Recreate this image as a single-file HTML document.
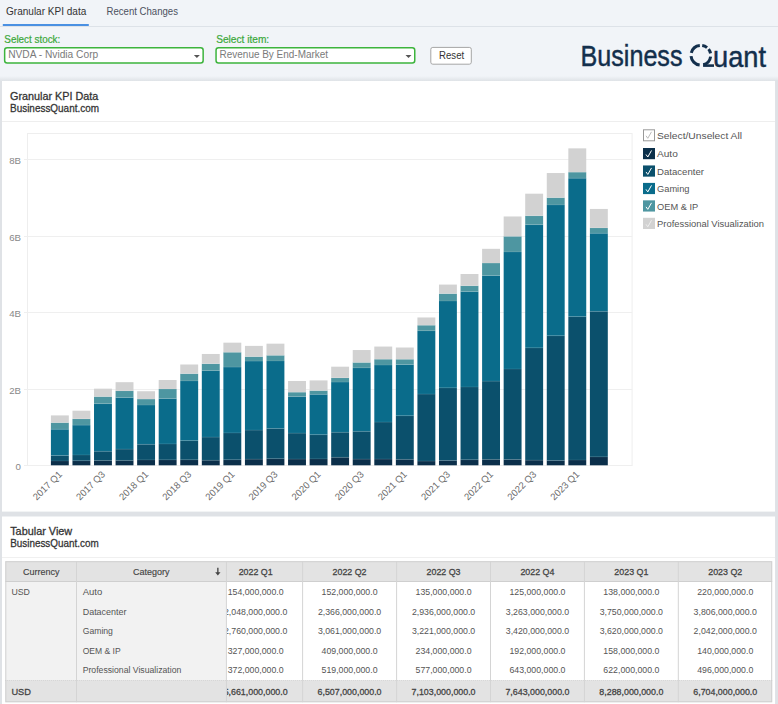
<!DOCTYPE html>
<html><head><meta charset="utf-8"><style>
html,body{margin:0;padding:0;background:#f1f4f8;width:778px;height:704px;overflow:hidden}
svg{display:block;font-family:"Liberation Sans", sans-serif}
</style></head><body>
<svg width="778" height="704" viewBox="0 0 778 704">
<rect x="0" y="0" width="778" height="78" fill="#f1f4f8"/>
<rect x="0" y="76" width="778" height="628" fill="#dfe2e6"/>
<defs><linearGradient id="sh" x1="0" y1="0" x2="0" y2="1"><stop offset="0" stop-color="#f1f4f8"/><stop offset="1" stop-color="#dfe3e7"/></linearGradient></defs>
<rect x="0" y="76" width="778" height="5" fill="url(#sh)"/>
<text x="6" y="15.2" font-size="11.5" fill="#333" font-weight="normal" text-anchor="start" textLength="80.3" lengthAdjust="spacingAndGlyphs">Granular KPI data</text>
<text x="106.5" y="15.2" font-size="11.5" fill="#4c5260" font-weight="normal" text-anchor="start" textLength="71.5" lengthAdjust="spacingAndGlyphs">Recent Changes</text>
<line x1="0" y1="26.5" x2="778" y2="26.5" stroke="#dde2e8" stroke-width="1"/>
<rect x="2.8" y="24" width="86" height="2" fill="#4a90e2"/>
<text x="4.3" y="43.1" font-size="10.3" fill="#3aa83a" font-weight="normal" text-anchor="start" textLength="56" lengthAdjust="spacingAndGlyphs" stroke="#3aa83a" stroke-width="0.2">Select stock:</text>
<text x="216.2" y="43.1" font-size="10.3" fill="#3aa83a" font-weight="normal" text-anchor="start" textLength="53" lengthAdjust="spacingAndGlyphs" stroke="#3aa83a" stroke-width="0.2">Select item:</text>
<rect x="4.65" y="47.75" width="198.5" height="15.25" rx="2.5" fill="#fff" stroke="#3db43d" stroke-width="1.5"/>
<text x="8.2" y="57.8" font-size="10" fill="#7a7a7a" font-weight="normal" text-anchor="start" textLength="90" lengthAdjust="spacingAndGlyphs">NVDA - Nvidia Corp</text>
<path d="M193.9,55 L199.9,55 L196.9,58 Z" fill="#555"/>
<rect x="216.05" y="47.75" width="198.7" height="15.25" rx="2.5" fill="#fff" stroke="#3db43d" stroke-width="1.5"/>
<text x="219.60000000000002" y="57.8" font-size="10" fill="#7a7a7a" font-weight="normal" text-anchor="start" textLength="108.5" lengthAdjust="spacingAndGlyphs">Revenue By End-Market</text>
<path d="M405.5,55 L411.5,55 L408.5,58 Z" fill="#555"/>
<rect x="430.8" y="47.4" width="40.5" height="16.8" rx="2" fill="#fff" stroke="#a5a5a5" stroke-width="1"/>
<text x="439" y="58.7" font-size="10.5" fill="#333" font-weight="normal" text-anchor="start" textLength="25.2" lengthAdjust="spacingAndGlyphs">Reset</text>
<text x="580.5" y="66.4" font-size="29" fill="#132f4c" font-weight="normal" text-anchor="start" textLength="102" lengthAdjust="spacingAndGlyphs" stroke="#132f4c" stroke-width="0.45">Business</text>
<text x="713" y="66.5" font-size="29" fill="#132f4c" font-weight="normal" text-anchor="start" textLength="53" lengthAdjust="spacingAndGlyphs" stroke="#132f4c" stroke-width="0.45">uant</text>
<path d="M699.65,65.03 A9.85,9.85 0 0 1 691.04,56.11" fill="none" stroke="#132f4c" stroke-width="3.0"/>
<path d="M691.29,52.87 A9.85,9.85 0 0 1 699.82,45.45" fill="none" stroke="#132f4c" stroke-width="3.0"/>
<path d="M702.22,45.50 A9.85,9.85 0 0 1 707.05,47.60" fill="none" stroke="#132f4c" stroke-width="3.0"/>
<path d="M708.61,49.19 A9.85,9.85 0 0 1 710.52,53.37" fill="none" stroke="#132f4c" stroke-width="3.0"/>
<path d="M710.60,56.62 A9.85,9.85 0 0 1 703.23,64.81" fill="none" stroke="#132f4c" stroke-width="3.0"/>
<path d="M703.1,65.6 L714,65.6" stroke="#132f4c" stroke-width="2.6"/>
<rect x="2" y="81" width="773.2" height="430.6" fill="#fff"/>
<text x="10" y="99.6" font-size="10.8" fill="#333" font-weight="normal" text-anchor="start" textLength="88.3" lengthAdjust="spacingAndGlyphs" stroke="#333" stroke-width="0.28">Granular KPI Data</text>
<text x="10" y="111.6" font-size="10.8" fill="#333" font-weight="normal" text-anchor="start" textLength="89" lengthAdjust="spacingAndGlyphs" stroke="#333" stroke-width="0.28">BusinessQuant.com</text>
<line x1="2" y1="121.5" x2="775.2" y2="121.5" stroke="#eeeeee" stroke-width="1"/>
<rect x="27.5" y="133.5" width="604.6" height="332" fill="none" stroke="#eeeeee" stroke-width="1"/>
<line x1="24" y1="159.5" x2="632.1" y2="159.5" stroke="#efefef" stroke-width="1"/>
<text x="21.0" y="163.6" font-size="9.7" fill="#888" font-weight="normal" text-anchor="end">8B</text>
<line x1="24" y1="236.5" x2="632.1" y2="236.5" stroke="#efefef" stroke-width="1"/>
<text x="21.0" y="240.6" font-size="9.7" fill="#888" font-weight="normal" text-anchor="end">6B</text>
<line x1="24" y1="312.5" x2="632.1" y2="312.5" stroke="#efefef" stroke-width="1"/>
<text x="21.0" y="316.6" font-size="9.7" fill="#888" font-weight="normal" text-anchor="end">4B</text>
<line x1="24" y1="389.5" x2="632.1" y2="389.5" stroke="#efefef" stroke-width="1"/>
<text x="21.0" y="393.6" font-size="9.7" fill="#888" font-weight="normal" text-anchor="end">2B</text>
<line x1="24" y1="465.5" x2="632.1" y2="465.5" stroke="#efefef" stroke-width="1"/>
<text x="21.0" y="469.6" font-size="9.7" fill="#888" font-weight="normal" text-anchor="end">0</text>
<rect x="50.90" y="460.98" width="17.9" height="4.32" fill="#0b2f4a"/>
<rect x="50.90" y="455.51" width="17.9" height="5.47" fill="#0b506c"/>
<rect x="50.90" y="429.24" width="17.9" height="26.27" fill="#0a6c8b"/>
<rect x="50.90" y="422.62" width="17.9" height="6.62" fill="#4e96a1"/>
<rect x="50.90" y="415.40" width="17.9" height="7.23" fill="#d2d2d2"/>
<line x1="50.90" y1="460.98" x2="68.80" y2="460.98" stroke="rgba(255,255,255,0.13)" stroke-width="0.8"/>
<line x1="50.90" y1="455.51" x2="68.80" y2="455.51" stroke="rgba(255,255,255,0.13)" stroke-width="0.8"/>
<line x1="50.90" y1="429.24" x2="68.80" y2="429.24" stroke="rgba(255,255,255,0.13)" stroke-width="0.8"/>
<line x1="50.90" y1="422.62" x2="68.80" y2="422.62" stroke="rgba(255,255,255,0.13)" stroke-width="0.8"/>
<rect x="72.46" y="460.75" width="17.9" height="4.55" fill="#0b2f4a"/>
<rect x="72.46" y="454.98" width="17.9" height="5.77" fill="#0b506c"/>
<rect x="72.46" y="425.11" width="17.9" height="29.87" fill="#0a6c8b"/>
<rect x="72.46" y="418.88" width="17.9" height="6.23" fill="#4e96a1"/>
<rect x="72.46" y="410.69" width="17.9" height="8.18" fill="#d2d2d2"/>
<line x1="72.46" y1="460.75" x2="90.36" y2="460.75" stroke="rgba(255,255,255,0.13)" stroke-width="0.8"/>
<line x1="72.46" y1="454.98" x2="90.36" y2="454.98" stroke="rgba(255,255,255,0.13)" stroke-width="0.8"/>
<line x1="72.46" y1="425.11" x2="90.36" y2="425.11" stroke="rgba(255,255,255,0.13)" stroke-width="0.8"/>
<line x1="72.46" y1="418.88" x2="90.36" y2="418.88" stroke="rgba(255,255,255,0.13)" stroke-width="0.8"/>
<rect x="94.02" y="460.44" width="17.9" height="4.86" fill="#0b2f4a"/>
<rect x="94.02" y="451.27" width="17.9" height="9.18" fill="#0b506c"/>
<rect x="94.02" y="403.70" width="17.9" height="47.57" fill="#0a6c8b"/>
<rect x="94.02" y="396.58" width="17.9" height="7.11" fill="#4e96a1"/>
<rect x="94.02" y="388.67" width="17.9" height="7.92" fill="#d2d2d2"/>
<line x1="94.02" y1="460.44" x2="111.92" y2="460.44" stroke="rgba(255,255,255,0.13)" stroke-width="0.8"/>
<line x1="94.02" y1="451.27" x2="111.92" y2="451.27" stroke="rgba(255,255,255,0.13)" stroke-width="0.8"/>
<line x1="94.02" y1="403.70" x2="111.92" y2="403.70" stroke="rgba(255,255,255,0.13)" stroke-width="0.8"/>
<line x1="94.02" y1="396.58" x2="111.92" y2="396.58" stroke="rgba(255,255,255,0.13)" stroke-width="0.8"/>
<rect x="115.58" y="460.41" width="17.9" height="4.89" fill="#0b2f4a"/>
<rect x="115.58" y="449.09" width="17.9" height="11.32" fill="#0b506c"/>
<rect x="115.58" y="397.54" width="17.9" height="51.55" fill="#0a6c8b"/>
<rect x="115.58" y="390.81" width="17.9" height="6.73" fill="#4e96a1"/>
<rect x="115.58" y="382.20" width="17.9" height="8.60" fill="#d2d2d2"/>
<line x1="115.58" y1="460.41" x2="133.48" y2="460.41" stroke="rgba(255,255,255,0.13)" stroke-width="0.8"/>
<line x1="115.58" y1="449.09" x2="133.48" y2="449.09" stroke="rgba(255,255,255,0.13)" stroke-width="0.8"/>
<line x1="115.58" y1="397.54" x2="133.48" y2="397.54" stroke="rgba(255,255,255,0.13)" stroke-width="0.8"/>
<line x1="115.58" y1="390.81" x2="133.48" y2="390.81" stroke="rgba(255,255,255,0.13)" stroke-width="0.8"/>
<rect x="137.14" y="459.95" width="17.9" height="5.35" fill="#0b2f4a"/>
<rect x="137.14" y="444.31" width="17.9" height="15.64" fill="#0b506c"/>
<rect x="137.14" y="405.03" width="17.9" height="39.27" fill="#0a6c8b"/>
<rect x="137.14" y="399.07" width="17.9" height="5.97" fill="#4e96a1"/>
<rect x="137.14" y="391.23" width="17.9" height="7.84" fill="#d2d2d2"/>
<line x1="137.14" y1="459.95" x2="155.04" y2="459.95" stroke="rgba(255,255,255,0.13)" stroke-width="0.8"/>
<line x1="137.14" y1="444.31" x2="155.04" y2="444.31" stroke="rgba(255,255,255,0.13)" stroke-width="0.8"/>
<line x1="137.14" y1="405.03" x2="155.04" y2="405.03" stroke="rgba(255,255,255,0.13)" stroke-width="0.8"/>
<line x1="137.14" y1="399.07" x2="155.04" y2="399.07" stroke="rgba(255,255,255,0.13)" stroke-width="0.8"/>
<rect x="158.70" y="459.87" width="17.9" height="5.43" fill="#0b2f4a"/>
<rect x="158.70" y="443.96" width="17.9" height="15.91" fill="#0b506c"/>
<rect x="158.70" y="398.61" width="17.9" height="45.35" fill="#0a6c8b"/>
<rect x="158.70" y="389.01" width="17.9" height="9.60" fill="#4e96a1"/>
<rect x="158.70" y="380.02" width="17.9" height="8.99" fill="#d2d2d2"/>
<line x1="158.70" y1="459.87" x2="176.60" y2="459.87" stroke="rgba(255,255,255,0.13)" stroke-width="0.8"/>
<line x1="158.70" y1="443.96" x2="176.60" y2="443.96" stroke="rgba(255,255,255,0.13)" stroke-width="0.8"/>
<line x1="158.70" y1="398.61" x2="176.60" y2="398.61" stroke="rgba(255,255,255,0.13)" stroke-width="0.8"/>
<line x1="158.70" y1="389.01" x2="176.60" y2="389.01" stroke="rgba(255,255,255,0.13)" stroke-width="0.8"/>
<rect x="180.26" y="459.79" width="17.9" height="5.51" fill="#0b2f4a"/>
<rect x="180.26" y="440.64" width="17.9" height="19.16" fill="#0b506c"/>
<rect x="180.26" y="380.94" width="17.9" height="59.69" fill="#0a6c8b"/>
<rect x="180.26" y="373.64" width="17.9" height="7.30" fill="#4e96a1"/>
<rect x="180.26" y="364.50" width="17.9" height="9.14" fill="#d2d2d2"/>
<line x1="180.26" y1="459.79" x2="198.16" y2="459.79" stroke="rgba(255,255,255,0.13)" stroke-width="0.8"/>
<line x1="180.26" y1="440.64" x2="198.16" y2="440.64" stroke="rgba(255,255,255,0.13)" stroke-width="0.8"/>
<line x1="180.26" y1="380.94" x2="198.16" y2="380.94" stroke="rgba(255,255,255,0.13)" stroke-width="0.8"/>
<line x1="180.26" y1="373.64" x2="198.16" y2="373.64" stroke="rgba(255,255,255,0.13)" stroke-width="0.8"/>
<rect x="201.82" y="460.25" width="17.9" height="5.05" fill="#0b2f4a"/>
<rect x="201.82" y="437.08" width="17.9" height="23.17" fill="#0b506c"/>
<rect x="201.82" y="370.58" width="17.9" height="66.50" fill="#0a6c8b"/>
<rect x="201.82" y="363.70" width="17.9" height="6.88" fill="#4e96a1"/>
<rect x="201.82" y="353.98" width="17.9" height="9.71" fill="#d2d2d2"/>
<line x1="201.82" y1="460.25" x2="219.72" y2="460.25" stroke="rgba(255,255,255,0.13)" stroke-width="0.8"/>
<line x1="201.82" y1="437.08" x2="219.72" y2="437.08" stroke="rgba(255,255,255,0.13)" stroke-width="0.8"/>
<line x1="201.82" y1="370.58" x2="219.72" y2="370.58" stroke="rgba(255,255,255,0.13)" stroke-width="0.8"/>
<line x1="201.82" y1="363.70" x2="219.72" y2="363.70" stroke="rgba(255,255,255,0.13)" stroke-width="0.8"/>
<rect x="223.38" y="459.76" width="17.9" height="5.54" fill="#0b2f4a"/>
<rect x="223.38" y="432.95" width="17.9" height="26.81" fill="#0b506c"/>
<rect x="223.38" y="367.06" width="17.9" height="65.89" fill="#0a6c8b"/>
<rect x="223.38" y="352.26" width="17.9" height="14.80" fill="#4e96a1"/>
<rect x="223.38" y="342.66" width="17.9" height="9.60" fill="#d2d2d2"/>
<line x1="223.38" y1="459.76" x2="241.28" y2="459.76" stroke="rgba(255,255,255,0.13)" stroke-width="0.8"/>
<line x1="223.38" y1="432.95" x2="241.28" y2="432.95" stroke="rgba(255,255,255,0.13)" stroke-width="0.8"/>
<line x1="223.38" y1="367.06" x2="241.28" y2="367.06" stroke="rgba(255,255,255,0.13)" stroke-width="0.8"/>
<line x1="223.38" y1="352.26" x2="241.28" y2="352.26" stroke="rgba(255,255,255,0.13)" stroke-width="0.8"/>
<rect x="244.94" y="459.14" width="17.9" height="6.16" fill="#0b2f4a"/>
<rect x="244.94" y="430.08" width="17.9" height="29.06" fill="#0b506c"/>
<rect x="244.94" y="361.06" width="17.9" height="69.02" fill="#0a6c8b"/>
<rect x="244.94" y="356.62" width="17.9" height="4.44" fill="#4e96a1"/>
<rect x="244.94" y="345.88" width="17.9" height="10.75" fill="#d2d2d2"/>
<line x1="244.94" y1="459.14" x2="262.84" y2="459.14" stroke="rgba(255,255,255,0.13)" stroke-width="0.8"/>
<line x1="244.94" y1="430.08" x2="262.84" y2="430.08" stroke="rgba(255,255,255,0.13)" stroke-width="0.8"/>
<line x1="244.94" y1="361.06" x2="262.84" y2="361.06" stroke="rgba(255,255,255,0.13)" stroke-width="0.8"/>
<line x1="244.94" y1="356.62" x2="262.84" y2="356.62" stroke="rgba(255,255,255,0.13)" stroke-width="0.8"/>
<rect x="266.50" y="458.72" width="17.9" height="6.58" fill="#0b2f4a"/>
<rect x="266.50" y="428.44" width="17.9" height="30.29" fill="#0b506c"/>
<rect x="266.50" y="360.98" width="17.9" height="67.46" fill="#0a6c8b"/>
<rect x="266.50" y="355.32" width="17.9" height="5.66" fill="#4e96a1"/>
<rect x="266.50" y="343.66" width="17.9" height="11.66" fill="#d2d2d2"/>
<line x1="266.50" y1="458.72" x2="284.40" y2="458.72" stroke="rgba(255,255,255,0.13)" stroke-width="0.8"/>
<line x1="266.50" y1="428.44" x2="284.40" y2="428.44" stroke="rgba(255,255,255,0.13)" stroke-width="0.8"/>
<line x1="266.50" y1="360.98" x2="284.40" y2="360.98" stroke="rgba(255,255,255,0.13)" stroke-width="0.8"/>
<line x1="266.50" y1="355.32" x2="284.40" y2="355.32" stroke="rgba(255,255,255,0.13)" stroke-width="0.8"/>
<rect x="288.06" y="459.07" width="17.9" height="6.23" fill="#0b2f4a"/>
<rect x="288.06" y="433.10" width="17.9" height="25.96" fill="#0b506c"/>
<rect x="288.06" y="396.62" width="17.9" height="36.48" fill="#0a6c8b"/>
<rect x="288.06" y="392.19" width="17.9" height="4.44" fill="#4e96a1"/>
<rect x="288.06" y="380.98" width="17.9" height="11.20" fill="#d2d2d2"/>
<line x1="288.06" y1="459.07" x2="305.96" y2="459.07" stroke="rgba(255,255,255,0.13)" stroke-width="0.8"/>
<line x1="288.06" y1="433.10" x2="305.96" y2="433.10" stroke="rgba(255,255,255,0.13)" stroke-width="0.8"/>
<line x1="288.06" y1="396.62" x2="305.96" y2="396.62" stroke="rgba(255,255,255,0.13)" stroke-width="0.8"/>
<line x1="288.06" y1="392.19" x2="305.96" y2="392.19" stroke="rgba(255,255,255,0.13)" stroke-width="0.8"/>
<rect x="309.62" y="458.95" width="17.9" height="6.35" fill="#0b2f4a"/>
<rect x="309.62" y="434.71" width="17.9" height="24.24" fill="#0b506c"/>
<rect x="309.62" y="394.36" width="17.9" height="40.34" fill="#0a6c8b"/>
<rect x="309.62" y="390.58" width="17.9" height="3.79" fill="#4e96a1"/>
<rect x="309.62" y="380.41" width="17.9" height="10.17" fill="#d2d2d2"/>
<line x1="309.62" y1="458.95" x2="327.52" y2="458.95" stroke="rgba(255,255,255,0.13)" stroke-width="0.8"/>
<line x1="309.62" y1="434.71" x2="327.52" y2="434.71" stroke="rgba(255,255,255,0.13)" stroke-width="0.8"/>
<line x1="309.62" y1="394.36" x2="327.52" y2="394.36" stroke="rgba(255,255,255,0.13)" stroke-width="0.8"/>
<line x1="309.62" y1="390.58" x2="327.52" y2="390.58" stroke="rgba(255,255,255,0.13)" stroke-width="0.8"/>
<rect x="331.18" y="457.31" width="17.9" height="7.99" fill="#0b2f4a"/>
<rect x="331.18" y="432.26" width="17.9" height="25.05" fill="#0b506c"/>
<rect x="331.18" y="382.05" width="17.9" height="50.21" fill="#0a6c8b"/>
<rect x="331.18" y="377.81" width="17.9" height="4.24" fill="#4e96a1"/>
<rect x="331.18" y="366.68" width="17.9" height="11.13" fill="#d2d2d2"/>
<line x1="331.18" y1="457.31" x2="349.08" y2="457.31" stroke="rgba(255,255,255,0.13)" stroke-width="0.8"/>
<line x1="331.18" y1="432.26" x2="349.08" y2="432.26" stroke="rgba(255,255,255,0.13)" stroke-width="0.8"/>
<line x1="331.18" y1="382.05" x2="349.08" y2="382.05" stroke="rgba(255,255,255,0.13)" stroke-width="0.8"/>
<line x1="331.18" y1="377.81" x2="349.08" y2="377.81" stroke="rgba(255,255,255,0.13)" stroke-width="0.8"/>
<rect x="352.74" y="459.11" width="17.9" height="6.19" fill="#0b2f4a"/>
<rect x="352.74" y="431.34" width="17.9" height="27.76" fill="#0b506c"/>
<rect x="352.74" y="367.90" width="17.9" height="63.44" fill="#0a6c8b"/>
<rect x="352.74" y="362.43" width="17.9" height="5.47" fill="#4e96a1"/>
<rect x="352.74" y="350.04" width="17.9" height="12.39" fill="#d2d2d2"/>
<line x1="352.74" y1="459.11" x2="370.64" y2="459.11" stroke="rgba(255,255,255,0.13)" stroke-width="0.8"/>
<line x1="352.74" y1="431.34" x2="370.64" y2="431.34" stroke="rgba(255,255,255,0.13)" stroke-width="0.8"/>
<line x1="352.74" y1="367.90" x2="370.64" y2="367.90" stroke="rgba(255,255,255,0.13)" stroke-width="0.8"/>
<line x1="352.74" y1="362.43" x2="370.64" y2="362.43" stroke="rgba(255,255,255,0.13)" stroke-width="0.8"/>
<rect x="374.30" y="459.07" width="17.9" height="6.23" fill="#0b2f4a"/>
<rect x="374.30" y="422.05" width="17.9" height="37.02" fill="#0b506c"/>
<rect x="374.30" y="365.03" width="17.9" height="57.02" fill="#0a6c8b"/>
<rect x="374.30" y="359.22" width="17.9" height="5.81" fill="#4e96a1"/>
<rect x="374.30" y="346.56" width="17.9" height="12.66" fill="#d2d2d2"/>
<line x1="374.30" y1="459.07" x2="392.20" y2="459.07" stroke="rgba(255,255,255,0.13)" stroke-width="0.8"/>
<line x1="374.30" y1="422.05" x2="392.20" y2="422.05" stroke="rgba(255,255,255,0.13)" stroke-width="0.8"/>
<line x1="374.30" y1="365.03" x2="392.20" y2="365.03" stroke="rgba(255,255,255,0.13)" stroke-width="0.8"/>
<line x1="374.30" y1="359.22" x2="392.20" y2="359.22" stroke="rgba(255,255,255,0.13)" stroke-width="0.8"/>
<rect x="395.86" y="459.37" width="17.9" height="5.93" fill="#0b2f4a"/>
<rect x="395.86" y="415.74" width="17.9" height="43.63" fill="#0b506c"/>
<rect x="395.86" y="364.54" width="17.9" height="51.20" fill="#0a6c8b"/>
<rect x="395.86" y="359.26" width="17.9" height="5.28" fill="#4e96a1"/>
<rect x="395.86" y="347.52" width="17.9" height="11.74" fill="#d2d2d2"/>
<line x1="395.86" y1="459.37" x2="413.76" y2="459.37" stroke="rgba(255,255,255,0.13)" stroke-width="0.8"/>
<line x1="395.86" y1="415.74" x2="413.76" y2="415.74" stroke="rgba(255,255,255,0.13)" stroke-width="0.8"/>
<line x1="395.86" y1="364.54" x2="413.76" y2="364.54" stroke="rgba(255,255,255,0.13)" stroke-width="0.8"/>
<line x1="395.86" y1="359.26" x2="413.76" y2="359.26" stroke="rgba(255,255,255,0.13)" stroke-width="0.8"/>
<rect x="417.42" y="461.06" width="17.9" height="4.24" fill="#0b2f4a"/>
<rect x="417.42" y="394.06" width="17.9" height="67.00" fill="#0b506c"/>
<rect x="417.42" y="330.81" width="17.9" height="63.25" fill="#0a6c8b"/>
<rect x="417.42" y="325.23" width="17.9" height="5.58" fill="#4e96a1"/>
<rect x="417.42" y="317.46" width="17.9" height="7.76" fill="#d2d2d2"/>
<line x1="417.42" y1="461.06" x2="435.32" y2="461.06" stroke="rgba(255,255,255,0.13)" stroke-width="0.8"/>
<line x1="417.42" y1="394.06" x2="435.32" y2="394.06" stroke="rgba(255,255,255,0.13)" stroke-width="0.8"/>
<line x1="417.42" y1="330.81" x2="435.32" y2="330.81" stroke="rgba(255,255,255,0.13)" stroke-width="0.8"/>
<line x1="417.42" y1="325.23" x2="435.32" y2="325.23" stroke="rgba(255,255,255,0.13)" stroke-width="0.8"/>
<rect x="438.98" y="460.52" width="17.9" height="4.78" fill="#0b2f4a"/>
<rect x="438.98" y="387.86" width="17.9" height="72.66" fill="#0b506c"/>
<rect x="438.98" y="301.02" width="17.9" height="86.84" fill="#0a6c8b"/>
<rect x="438.98" y="293.60" width="17.9" height="7.42" fill="#4e96a1"/>
<rect x="438.98" y="284.58" width="17.9" height="9.02" fill="#d2d2d2"/>
<line x1="438.98" y1="460.52" x2="456.88" y2="460.52" stroke="rgba(255,255,255,0.13)" stroke-width="0.8"/>
<line x1="438.98" y1="387.86" x2="456.88" y2="387.86" stroke="rgba(255,255,255,0.13)" stroke-width="0.8"/>
<line x1="438.98" y1="301.02" x2="456.88" y2="301.02" stroke="rgba(255,255,255,0.13)" stroke-width="0.8"/>
<line x1="438.98" y1="293.60" x2="456.88" y2="293.60" stroke="rgba(255,255,255,0.13)" stroke-width="0.8"/>
<rect x="460.54" y="459.76" width="17.9" height="5.54" fill="#0b2f4a"/>
<rect x="460.54" y="386.98" width="17.9" height="72.77" fill="#0b506c"/>
<rect x="460.54" y="291.58" width="17.9" height="95.41" fill="#0a6c8b"/>
<rect x="460.54" y="285.72" width="17.9" height="5.85" fill="#4e96a1"/>
<rect x="460.54" y="273.99" width="17.9" height="11.74" fill="#d2d2d2"/>
<line x1="460.54" y1="459.76" x2="478.44" y2="459.76" stroke="rgba(255,255,255,0.13)" stroke-width="0.8"/>
<line x1="460.54" y1="386.98" x2="478.44" y2="386.98" stroke="rgba(255,255,255,0.13)" stroke-width="0.8"/>
<line x1="460.54" y1="291.58" x2="478.44" y2="291.58" stroke="rgba(255,255,255,0.13)" stroke-width="0.8"/>
<line x1="460.54" y1="285.72" x2="478.44" y2="285.72" stroke="rgba(255,255,255,0.13)" stroke-width="0.8"/>
<rect x="482.10" y="459.41" width="17.9" height="5.89" fill="#0b2f4a"/>
<rect x="482.10" y="381.10" width="17.9" height="78.32" fill="#0b506c"/>
<rect x="482.10" y="275.55" width="17.9" height="105.54" fill="#0a6c8b"/>
<rect x="482.10" y="263.05" width="17.9" height="12.50" fill="#4e96a1"/>
<rect x="482.10" y="248.82" width="17.9" height="14.23" fill="#d2d2d2"/>
<line x1="482.10" y1="459.41" x2="500.00" y2="459.41" stroke="rgba(255,255,255,0.13)" stroke-width="0.8"/>
<line x1="482.10" y1="381.10" x2="500.00" y2="381.10" stroke="rgba(255,255,255,0.13)" stroke-width="0.8"/>
<line x1="482.10" y1="275.55" x2="500.00" y2="275.55" stroke="rgba(255,255,255,0.13)" stroke-width="0.8"/>
<line x1="482.10" y1="263.05" x2="500.00" y2="263.05" stroke="rgba(255,255,255,0.13)" stroke-width="0.8"/>
<rect x="503.66" y="459.49" width="17.9" height="5.81" fill="#0b2f4a"/>
<rect x="503.66" y="369.01" width="17.9" height="90.48" fill="#0b506c"/>
<rect x="503.66" y="251.96" width="17.9" height="117.05" fill="#0a6c8b"/>
<rect x="503.66" y="236.32" width="17.9" height="15.64" fill="#4e96a1"/>
<rect x="503.66" y="216.47" width="17.9" height="19.85" fill="#d2d2d2"/>
<line x1="503.66" y1="459.49" x2="521.56" y2="459.49" stroke="rgba(255,255,255,0.13)" stroke-width="0.8"/>
<line x1="503.66" y1="369.01" x2="521.56" y2="369.01" stroke="rgba(255,255,255,0.13)" stroke-width="0.8"/>
<line x1="503.66" y1="251.96" x2="521.56" y2="251.96" stroke="rgba(255,255,255,0.13)" stroke-width="0.8"/>
<line x1="503.66" y1="236.32" x2="521.56" y2="236.32" stroke="rgba(255,255,255,0.13)" stroke-width="0.8"/>
<rect x="525.22" y="460.14" width="17.9" height="5.16" fill="#0b2f4a"/>
<rect x="525.22" y="347.86" width="17.9" height="112.27" fill="#0b506c"/>
<rect x="525.22" y="224.69" width="17.9" height="123.17" fill="#0a6c8b"/>
<rect x="525.22" y="215.75" width="17.9" height="8.95" fill="#4e96a1"/>
<rect x="525.22" y="193.68" width="17.9" height="22.06" fill="#d2d2d2"/>
<line x1="525.22" y1="460.14" x2="543.12" y2="460.14" stroke="rgba(255,255,255,0.13)" stroke-width="0.8"/>
<line x1="525.22" y1="347.86" x2="543.12" y2="347.86" stroke="rgba(255,255,255,0.13)" stroke-width="0.8"/>
<line x1="525.22" y1="224.69" x2="543.12" y2="224.69" stroke="rgba(255,255,255,0.13)" stroke-width="0.8"/>
<line x1="525.22" y1="215.75" x2="543.12" y2="215.75" stroke="rgba(255,255,255,0.13)" stroke-width="0.8"/>
<rect x="546.78" y="460.52" width="17.9" height="4.78" fill="#0b2f4a"/>
<rect x="546.78" y="335.74" width="17.9" height="124.78" fill="#0b506c"/>
<rect x="546.78" y="204.96" width="17.9" height="130.78" fill="#0a6c8b"/>
<rect x="546.78" y="197.62" width="17.9" height="7.34" fill="#4e96a1"/>
<rect x="546.78" y="173.03" width="17.9" height="24.59" fill="#d2d2d2"/>
<line x1="546.78" y1="460.52" x2="564.68" y2="460.52" stroke="rgba(255,255,255,0.13)" stroke-width="0.8"/>
<line x1="546.78" y1="335.74" x2="564.68" y2="335.74" stroke="rgba(255,255,255,0.13)" stroke-width="0.8"/>
<line x1="546.78" y1="204.96" x2="564.68" y2="204.96" stroke="rgba(255,255,255,0.13)" stroke-width="0.8"/>
<line x1="546.78" y1="197.62" x2="564.68" y2="197.62" stroke="rgba(255,255,255,0.13)" stroke-width="0.8"/>
<rect x="568.34" y="460.02" width="17.9" height="5.28" fill="#0b2f4a"/>
<rect x="568.34" y="316.62" width="17.9" height="143.40" fill="#0b506c"/>
<rect x="568.34" y="178.19" width="17.9" height="138.43" fill="#0a6c8b"/>
<rect x="568.34" y="172.15" width="17.9" height="6.04" fill="#4e96a1"/>
<rect x="568.34" y="148.37" width="17.9" height="23.79" fill="#d2d2d2"/>
<line x1="568.34" y1="460.02" x2="586.24" y2="460.02" stroke="rgba(255,255,255,0.13)" stroke-width="0.8"/>
<line x1="568.34" y1="316.62" x2="586.24" y2="316.62" stroke="rgba(255,255,255,0.13)" stroke-width="0.8"/>
<line x1="568.34" y1="178.19" x2="586.24" y2="178.19" stroke="rgba(255,255,255,0.13)" stroke-width="0.8"/>
<line x1="568.34" y1="172.15" x2="586.24" y2="172.15" stroke="rgba(255,255,255,0.13)" stroke-width="0.8"/>
<rect x="589.90" y="456.89" width="17.9" height="8.41" fill="#0b2f4a"/>
<rect x="589.90" y="311.35" width="17.9" height="145.54" fill="#0b506c"/>
<rect x="589.90" y="233.26" width="17.9" height="78.09" fill="#0a6c8b"/>
<rect x="589.90" y="227.91" width="17.9" height="5.35" fill="#4e96a1"/>
<rect x="589.90" y="208.94" width="17.9" height="18.97" fill="#d2d2d2"/>
<line x1="589.90" y1="456.89" x2="607.80" y2="456.89" stroke="rgba(255,255,255,0.13)" stroke-width="0.8"/>
<line x1="589.90" y1="311.35" x2="607.80" y2="311.35" stroke="rgba(255,255,255,0.13)" stroke-width="0.8"/>
<line x1="589.90" y1="233.26" x2="607.80" y2="233.26" stroke="rgba(255,255,255,0.13)" stroke-width="0.8"/>
<line x1="589.90" y1="227.91" x2="607.80" y2="227.91" stroke="rgba(255,255,255,0.13)" stroke-width="0.8"/>
<text x="62.65" y="475" font-size="9.6" fill="#6a6a6a" text-anchor="end" textLength="36.5" lengthAdjust="spacingAndGlyphs" transform="rotate(-45 62.65 475)">2017 Q1</text>
<text x="105.77" y="475" font-size="9.6" fill="#6a6a6a" text-anchor="end" textLength="36.5" lengthAdjust="spacingAndGlyphs" transform="rotate(-45 105.77 475)">2017 Q3</text>
<text x="148.89" y="475" font-size="9.6" fill="#6a6a6a" text-anchor="end" textLength="36.5" lengthAdjust="spacingAndGlyphs" transform="rotate(-45 148.89 475)">2018 Q1</text>
<text x="192.01" y="475" font-size="9.6" fill="#6a6a6a" text-anchor="end" textLength="36.5" lengthAdjust="spacingAndGlyphs" transform="rotate(-45 192.01 475)">2018 Q3</text>
<text x="235.13" y="475" font-size="9.6" fill="#6a6a6a" text-anchor="end" textLength="36.5" lengthAdjust="spacingAndGlyphs" transform="rotate(-45 235.13 475)">2019 Q1</text>
<text x="278.25" y="475" font-size="9.6" fill="#6a6a6a" text-anchor="end" textLength="36.5" lengthAdjust="spacingAndGlyphs" transform="rotate(-45 278.25 475)">2019 Q3</text>
<text x="321.37" y="475" font-size="9.6" fill="#6a6a6a" text-anchor="end" textLength="36.5" lengthAdjust="spacingAndGlyphs" transform="rotate(-45 321.37 475)">2020 Q1</text>
<text x="364.49" y="475" font-size="9.6" fill="#6a6a6a" text-anchor="end" textLength="36.5" lengthAdjust="spacingAndGlyphs" transform="rotate(-45 364.49 475)">2020 Q3</text>
<text x="407.61" y="475" font-size="9.6" fill="#6a6a6a" text-anchor="end" textLength="36.5" lengthAdjust="spacingAndGlyphs" transform="rotate(-45 407.61 475)">2021 Q1</text>
<text x="450.73" y="475" font-size="9.6" fill="#6a6a6a" text-anchor="end" textLength="36.5" lengthAdjust="spacingAndGlyphs" transform="rotate(-45 450.73 475)">2021 Q3</text>
<text x="493.85" y="475" font-size="9.6" fill="#6a6a6a" text-anchor="end" textLength="36.5" lengthAdjust="spacingAndGlyphs" transform="rotate(-45 493.85 475)">2022 Q1</text>
<text x="536.97" y="475" font-size="9.6" fill="#6a6a6a" text-anchor="end" textLength="36.5" lengthAdjust="spacingAndGlyphs" transform="rotate(-45 536.97 475)">2022 Q3</text>
<text x="580.09" y="475" font-size="9.6" fill="#6a6a6a" text-anchor="end" textLength="36.5" lengthAdjust="spacingAndGlyphs" transform="rotate(-45 580.09 475)">2023 Q1</text>
<rect x="643.5" y="129.8" width="11" height="11" fill="#fff" stroke="#999" stroke-width="1"/>
<path d="M646,135.8 L647.8,138.3 L651.5,131.8" fill="none" stroke="#bbb" stroke-width="1"/>
<text x="657" y="138.7" font-size="9.8" fill="#555" font-weight="normal" text-anchor="start" textLength="85" lengthAdjust="spacingAndGlyphs">Select/Unselect All</text>
<rect x="643" y="148.0" width="12" height="11.2" fill="#0b2f4a"/>
<path d="M646,154.5 L647.8,157.0 L651.5,150.5" fill="none" stroke="#fff" stroke-width="1"/>
<text x="657" y="157.3" font-size="9.3" fill="#555" font-weight="normal" text-anchor="start" textLength="20.8" lengthAdjust="spacingAndGlyphs">Auto</text>
<rect x="643" y="165.45" width="12" height="11.2" fill="#0b506c"/>
<path d="M646,171.95 L647.8,174.45 L651.5,167.95" fill="none" stroke="#fff" stroke-width="1"/>
<text x="657" y="174.7" font-size="9.3" fill="#555" font-weight="normal" text-anchor="start" textLength="47" lengthAdjust="spacingAndGlyphs">Datacenter</text>
<rect x="643" y="182.9" width="12" height="11.2" fill="#0a6c8b"/>
<path d="M646,189.4 L647.8,191.9 L651.5,185.4" fill="none" stroke="#fff" stroke-width="1"/>
<text x="657" y="192.1" font-size="9.3" fill="#555" font-weight="normal" text-anchor="start" textLength="32.5" lengthAdjust="spacingAndGlyphs">Gaming</text>
<rect x="643" y="200.35" width="12" height="11.2" fill="#4e96a1"/>
<path d="M646,206.85 L647.8,209.35 L651.5,202.85" fill="none" stroke="#fff" stroke-width="1"/>
<text x="657" y="209.5" font-size="9.3" fill="#555" font-weight="normal" text-anchor="start" textLength="41.2" lengthAdjust="spacingAndGlyphs">OEM &amp; IP</text>
<rect x="643" y="217.8" width="12" height="11.2" fill="#d2d2d2"/>
<path d="M646,224.3 L647.8,226.8 L651.5,220.3" fill="none" stroke="#eee" stroke-width="1"/>
<text x="657" y="226.9" font-size="9.3" fill="#555" font-weight="normal" text-anchor="start" textLength="107" lengthAdjust="spacingAndGlyphs">Professional Visualization</text>
<rect x="2" y="516.5" width="773.2" height="200" fill="#fff"/>
<text x="10.2" y="534.6" font-size="10.8" fill="#333" font-weight="normal" text-anchor="start" textLength="62" lengthAdjust="spacingAndGlyphs" stroke="#333" stroke-width="0.28">Tabular View</text>
<text x="10.2" y="546.6" font-size="10.8" fill="#333" font-weight="normal" text-anchor="start" textLength="88.5" lengthAdjust="spacingAndGlyphs" stroke="#333" stroke-width="0.28">BusinessQuant.com</text>
<line x1="2" y1="557.5" x2="775.2" y2="557.5" stroke="#f0f0f0" stroke-width="1"/>
<rect x="5.3" y="561.2" width="766.9000000000001" height="20.299999999999955" fill="#e3e3e3"/>
<rect x="5.3" y="581.5" width="221.1" height="99.0" fill="#f2f2f2"/>
<rect x="226.4" y="581.5" width="545.8000000000001" height="99.0" fill="#fff"/>
<rect x="5.3" y="680.5" width="766.9000000000001" height="21.8" fill="#e3e3e3"/>
<rect x="5.8" y="561.7" width="765.9000000000001" height="140.0" fill="none" stroke="#d0d0d0" stroke-width="1"/>
<line x1="5.3" y1="581.5" x2="772.2" y2="581.5" stroke="#cfcfcf" stroke-width="1"/>
<line x1="5.3" y1="680.5" x2="772.2" y2="680.5" stroke="#cccccc" stroke-width="1" stroke-dasharray="1,1"/>
<line x1="76.5" y1="561.2" x2="76.5" y2="702.2" stroke="#d4d4d4" stroke-width="1"/>
<line x1="226.4" y1="561.2" x2="226.4" y2="702.2" stroke="#d4d4d4" stroke-width="1"/>
<line x1="302.6" y1="561.2" x2="302.6" y2="702.2" stroke="#d4d4d4" stroke-width="1"/>
<line x1="396.6" y1="561.2" x2="396.6" y2="702.2" stroke="#d4d4d4" stroke-width="1"/>
<line x1="490.5" y1="561.2" x2="490.5" y2="702.2" stroke="#d4d4d4" stroke-width="1"/>
<line x1="584.4" y1="561.2" x2="584.4" y2="702.2" stroke="#d4d4d4" stroke-width="1"/>
<line x1="678.3" y1="561.2" x2="678.3" y2="702.2" stroke="#d4d4d4" stroke-width="1"/>
<text x="41.2" y="574.8" font-size="9.6" fill="#444" font-weight="normal" text-anchor="middle" textLength="36.5" lengthAdjust="spacingAndGlyphs" stroke="#444" stroke-width="0.15">Currency</text>
<text x="151.2" y="574.8" font-size="9.6" fill="#444" font-weight="normal" text-anchor="middle" textLength="36.5" lengthAdjust="spacingAndGlyphs" stroke="#444" stroke-width="0.15">Category</text>
<path d="M217.85,567.7 L217.85,573" stroke="#4a4a4a" stroke-width="1.4"/><path d="M215.2,572.3 L220.5,572.3 L217.85,575.4 Z" fill="#444"/>
<text x="11.4" y="595.1" font-size="9.6" fill="#555" font-weight="normal" text-anchor="start" textLength="18.5" lengthAdjust="spacingAndGlyphs">USD</text>
<clipPath id="cl"><rect x="226.9" y="560" width="560" height="150"/></clipPath>
<g clip-path="url(#cl)">
<text x="255.65" y="574.8" font-size="9.8" fill="#444" font-weight="normal" text-anchor="middle" textLength="34" lengthAdjust="spacingAndGlyphs" stroke="#444" stroke-width="0.3">2022 Q1</text>
<text x="255.65" y="595.1" font-size="9.9" fill="#555" font-weight="normal" text-anchor="middle" textLength="56" lengthAdjust="spacingAndGlyphs">154,000,000.0</text>
<text x="255.65" y="614.8" font-size="9.9" fill="#555" font-weight="normal" text-anchor="middle" textLength="63.3" lengthAdjust="spacingAndGlyphs">2,048,000,000.0</text>
<text x="255.65" y="634.4" font-size="9.9" fill="#555" font-weight="normal" text-anchor="middle" textLength="63.3" lengthAdjust="spacingAndGlyphs">2,760,000,000.0</text>
<text x="255.65" y="653.9" font-size="9.9" fill="#555" font-weight="normal" text-anchor="middle" textLength="56" lengthAdjust="spacingAndGlyphs">327,000,000.0</text>
<text x="255.65" y="673.3" font-size="9.9" fill="#555" font-weight="normal" text-anchor="middle" textLength="56" lengthAdjust="spacingAndGlyphs">372,000,000.0</text>
<text x="255.65" y="694.7" font-size="9.9" fill="#444" font-weight="normal" text-anchor="middle" textLength="64" lengthAdjust="spacingAndGlyphs" stroke="#444" stroke-width="0.3">5,661,000,000.0</text>
<text x="349.55" y="574.8" font-size="9.8" fill="#444" font-weight="normal" text-anchor="middle" textLength="34" lengthAdjust="spacingAndGlyphs" stroke="#444" stroke-width="0.3">2022 Q2</text>
<text x="349.55" y="595.1" font-size="9.9" fill="#555" font-weight="normal" text-anchor="middle" textLength="56" lengthAdjust="spacingAndGlyphs">152,000,000.0</text>
<text x="349.55" y="614.8" font-size="9.9" fill="#555" font-weight="normal" text-anchor="middle" textLength="63.3" lengthAdjust="spacingAndGlyphs">2,366,000,000.0</text>
<text x="349.55" y="634.4" font-size="9.9" fill="#555" font-weight="normal" text-anchor="middle" textLength="63.3" lengthAdjust="spacingAndGlyphs">3,061,000,000.0</text>
<text x="349.55" y="653.9" font-size="9.9" fill="#555" font-weight="normal" text-anchor="middle" textLength="56" lengthAdjust="spacingAndGlyphs">409,000,000.0</text>
<text x="349.55" y="673.3" font-size="9.9" fill="#555" font-weight="normal" text-anchor="middle" textLength="56" lengthAdjust="spacingAndGlyphs">519,000,000.0</text>
<text x="349.55" y="694.7" font-size="9.9" fill="#444" font-weight="normal" text-anchor="middle" textLength="64" lengthAdjust="spacingAndGlyphs" stroke="#444" stroke-width="0.3">6,507,000,000.0</text>
<text x="443.55" y="574.8" font-size="9.8" fill="#444" font-weight="normal" text-anchor="middle" textLength="34" lengthAdjust="spacingAndGlyphs" stroke="#444" stroke-width="0.3">2022 Q3</text>
<text x="443.55" y="595.1" font-size="9.9" fill="#555" font-weight="normal" text-anchor="middle" textLength="56" lengthAdjust="spacingAndGlyphs">135,000,000.0</text>
<text x="443.55" y="614.8" font-size="9.9" fill="#555" font-weight="normal" text-anchor="middle" textLength="63.3" lengthAdjust="spacingAndGlyphs">2,936,000,000.0</text>
<text x="443.55" y="634.4" font-size="9.9" fill="#555" font-weight="normal" text-anchor="middle" textLength="63.3" lengthAdjust="spacingAndGlyphs">3,221,000,000.0</text>
<text x="443.55" y="653.9" font-size="9.9" fill="#555" font-weight="normal" text-anchor="middle" textLength="56" lengthAdjust="spacingAndGlyphs">234,000,000.0</text>
<text x="443.55" y="673.3" font-size="9.9" fill="#555" font-weight="normal" text-anchor="middle" textLength="56" lengthAdjust="spacingAndGlyphs">577,000,000.0</text>
<text x="443.55" y="694.7" font-size="9.9" fill="#444" font-weight="normal" text-anchor="middle" textLength="64" lengthAdjust="spacingAndGlyphs" stroke="#444" stroke-width="0.3">7,103,000,000.0</text>
<text x="537.45" y="574.8" font-size="9.8" fill="#444" font-weight="normal" text-anchor="middle" textLength="34" lengthAdjust="spacingAndGlyphs" stroke="#444" stroke-width="0.3">2022 Q4</text>
<text x="537.45" y="595.1" font-size="9.9" fill="#555" font-weight="normal" text-anchor="middle" textLength="56" lengthAdjust="spacingAndGlyphs">125,000,000.0</text>
<text x="537.45" y="614.8" font-size="9.9" fill="#555" font-weight="normal" text-anchor="middle" textLength="63.3" lengthAdjust="spacingAndGlyphs">3,263,000,000.0</text>
<text x="537.45" y="634.4" font-size="9.9" fill="#555" font-weight="normal" text-anchor="middle" textLength="63.3" lengthAdjust="spacingAndGlyphs">3,420,000,000.0</text>
<text x="537.45" y="653.9" font-size="9.9" fill="#555" font-weight="normal" text-anchor="middle" textLength="56" lengthAdjust="spacingAndGlyphs">192,000,000.0</text>
<text x="537.45" y="673.3" font-size="9.9" fill="#555" font-weight="normal" text-anchor="middle" textLength="56" lengthAdjust="spacingAndGlyphs">643,000,000.0</text>
<text x="537.45" y="694.7" font-size="9.9" fill="#444" font-weight="normal" text-anchor="middle" textLength="64" lengthAdjust="spacingAndGlyphs" stroke="#444" stroke-width="0.3">7,643,000,000.0</text>
<text x="631.35" y="574.8" font-size="9.8" fill="#444" font-weight="normal" text-anchor="middle" textLength="34" lengthAdjust="spacingAndGlyphs" stroke="#444" stroke-width="0.3">2023 Q1</text>
<text x="631.35" y="595.1" font-size="9.9" fill="#555" font-weight="normal" text-anchor="middle" textLength="56" lengthAdjust="spacingAndGlyphs">138,000,000.0</text>
<text x="631.35" y="614.8" font-size="9.9" fill="#555" font-weight="normal" text-anchor="middle" textLength="63.3" lengthAdjust="spacingAndGlyphs">3,750,000,000.0</text>
<text x="631.35" y="634.4" font-size="9.9" fill="#555" font-weight="normal" text-anchor="middle" textLength="63.3" lengthAdjust="spacingAndGlyphs">3,620,000,000.0</text>
<text x="631.35" y="653.9" font-size="9.9" fill="#555" font-weight="normal" text-anchor="middle" textLength="56" lengthAdjust="spacingAndGlyphs">158,000,000.0</text>
<text x="631.35" y="673.3" font-size="9.9" fill="#555" font-weight="normal" text-anchor="middle" textLength="56" lengthAdjust="spacingAndGlyphs">622,000,000.0</text>
<text x="631.35" y="694.7" font-size="9.9" fill="#444" font-weight="normal" text-anchor="middle" textLength="64" lengthAdjust="spacingAndGlyphs" stroke="#444" stroke-width="0.3">8,288,000,000.0</text>
<text x="725.25" y="574.8" font-size="9.8" fill="#444" font-weight="normal" text-anchor="middle" textLength="34" lengthAdjust="spacingAndGlyphs" stroke="#444" stroke-width="0.3">2023 Q2</text>
<text x="725.25" y="595.1" font-size="9.9" fill="#555" font-weight="normal" text-anchor="middle" textLength="56" lengthAdjust="spacingAndGlyphs">220,000,000.0</text>
<text x="725.25" y="614.8" font-size="9.9" fill="#555" font-weight="normal" text-anchor="middle" textLength="63.3" lengthAdjust="spacingAndGlyphs">3,806,000,000.0</text>
<text x="725.25" y="634.4" font-size="9.9" fill="#555" font-weight="normal" text-anchor="middle" textLength="63.3" lengthAdjust="spacingAndGlyphs">2,042,000,000.0</text>
<text x="725.25" y="653.9" font-size="9.9" fill="#555" font-weight="normal" text-anchor="middle" textLength="56" lengthAdjust="spacingAndGlyphs">140,000,000.0</text>
<text x="725.25" y="673.3" font-size="9.9" fill="#555" font-weight="normal" text-anchor="middle" textLength="56" lengthAdjust="spacingAndGlyphs">496,000,000.0</text>
<text x="725.25" y="694.7" font-size="9.9" fill="#444" font-weight="normal" text-anchor="middle" textLength="64" lengthAdjust="spacingAndGlyphs" stroke="#444" stroke-width="0.3">6,704,000,000.0</text>
</g>
<text x="82.7" y="595.1" font-size="9.6" fill="#555" font-weight="normal" text-anchor="start" textLength="19.6" lengthAdjust="spacingAndGlyphs">Auto</text>
<text x="82.7" y="614.8" font-size="9.6" fill="#555" font-weight="normal" text-anchor="start" textLength="43.8" lengthAdjust="spacingAndGlyphs">Datacenter</text>
<text x="82.7" y="634.4" font-size="9.6" fill="#555" font-weight="normal" text-anchor="start" textLength="30.2" lengthAdjust="spacingAndGlyphs">Gaming</text>
<text x="82.7" y="653.9" font-size="9.6" fill="#555" font-weight="normal" text-anchor="start" textLength="38" lengthAdjust="spacingAndGlyphs">OEM &amp; IP</text>
<text x="82.7" y="673.3" font-size="9.6" fill="#555" font-weight="normal" text-anchor="start" textLength="98.6" lengthAdjust="spacingAndGlyphs">Professional Visualization</text>
<text x="11.4" y="694.7" font-size="9.8" fill="#444" font-weight="normal" text-anchor="start" textLength="19.5" lengthAdjust="spacingAndGlyphs" stroke="#444" stroke-width="0.3">USD</text>
<rect x="775.2" y="80" width="2.8" height="624" fill="#dfe2e6"/>
</svg></body></html>
